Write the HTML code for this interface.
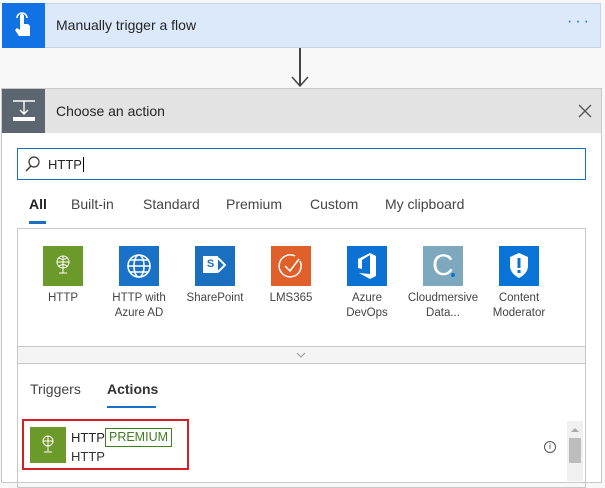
<!DOCTYPE html><html><head><style>
*{box-sizing:border-box;margin:0;padding:0}
body{width:605px;height:478px;background:#f8f8f8;font-family:"Liberation Sans",sans-serif;position:relative;overflow:hidden;color:#252525}
.a{position:absolute}
.lbl{position:absolute;width:80px;text-align:center;font-size:11.5px;line-height:15px;color:#444}
.ic{position:absolute;top:246px;width:40px;height:40px}
.tab{position:absolute;top:196px;font-size:14px;color:#444}
</style></head><body>
<div class="a" style="left:2px;top:3px;width:599px;height:45px;background:#dbe9fa;border:1px solid #c6d3e0"></div>
<div class="a" style="left:2px;top:3px;width:43px;height:45px;background:#1172e6"></div>
<svg class="a" style="left:13px;top:11px" width="20" height="28" viewBox="0 0 20 28"><path d="M7 13V5a2 2 0 0 1 4 0v8h3a3 3 0 0 1 3 3v9H6l-4-6 2-2 3 2z" fill="#fff"/><path d="M4 7a5 5 0 0 1 10 0" stroke="#fff" fill="none" stroke-width="1.5"/></svg>
<div class="a" style="left:56px;top:17px;font-size:14px">Manually trigger a flow</div>
<div class="a" style="left:567px;top:13px;font-size:16px;color:#1172e6;letter-spacing:3px">···</div>
<div class="a" style="left:299px;top:48px;width:1.5px;height:37px;background:#444"></div>
<svg class="a" style="left:291px;top:76px" width="18" height="12"><path d="M1 1l8 9 8-9" stroke="#444" stroke-width="1.5" fill="none"/></svg>
<div class="a" style="left:1px;top:88px;width:601px;height:395px;background:#fff;border:1px solid #c8c8c8"></div>
<div class="a" style="left:2px;top:89px;width:599px;height:44px;background:#e3e3e3"></div>
<div class="a" style="left:2px;top:89px;width:43px;height:44px;background:#5c6670"></div>
<svg class="a" style="left:12px;top:99px" width="24" height="24"><path d="M1 2h22M12 2v13M8 11l4 4 4-4" stroke="#fff" stroke-width="1.4" fill="none"/><rect x="1" y="18" width="22" height="4" fill="#fff"/></svg>
<div class="a" style="left:56px;top:103px;font-size:14px">Choose an action</div>
<svg class="a" style="left:578px;top:104px" width="14" height="14"><path d="M1 1l12 12M13 1L1 13" stroke="#555" stroke-width="1.3"/></svg>
<div class="a" style="left:17px;top:148px;width:569px;height:32px;border:1px solid #1a6fc6"></div>
<svg class="a" style="left:24px;top:155px" width="16" height="18"><circle cx="10" cy="7" r="5" stroke="#333" fill="none" stroke-width="1.2"/><path d="M7 11l-5 5" stroke="#333" stroke-width="1.3"/></svg>
<div class="a" style="left:48px;top:157px;font-size:13px">HTTP<span style="border-left:1px solid #000;margin-left:1px"></span></div>
<div class="tab" style="left:29px"><b style="font-weight:600;color:#222">All</b></div>
<div class="tab" style="left:71px">Built-in</div>
<div class="tab" style="left:143px">Standard</div>
<div class="tab" style="left:226px">Premium</div>
<div class="tab" style="left:310px">Custom</div>
<div class="tab" style="left:385px">My clipboard</div>
<div class="a" style="left:29px;top:221px;width:17px;height:3px;background:#1a6fc6"></div>
<div class="a" style="left:17px;top:228px;width:569px;height:260px;border:1px solid #c8c8c8"></div>
<div class="ic" style="left:43px;background:#6b9a2a"></div>
<div class="ic" style="left:119px;background:#1a72c8"></div>
<div class="ic" style="left:195px;background:#1b6fbf"></div>
<div class="ic" style="left:271px;background:#e0602b"></div>
<div class="ic" style="left:347px;background:#0b72d4"></div>
<div class="ic" style="left:423px;background:#7ea8be"></div>
<div class="ic" style="left:499px;background:#0a74d6"></div>
<svg class="a" style="left:54px;top:254px" width="18" height="24"><circle cx="9" cy="8" r="6" stroke="#fff" fill="none"/><path d="M3 8h12M9 2v12M5 4c3 2 5 2 8 0M5 12c3-2 5-2 8 0M9 14v5M5 19h8" stroke="#fff" fill="none"/></svg>
<svg class="a" style="left:125px;top:252px" width="28" height="28"><circle cx="14" cy="14" r="11" stroke="#fff" fill="none" stroke-width="1.6"/><ellipse cx="14" cy="14" rx="5" ry="11" stroke="#fff" fill="none" stroke-width="1.6"/><path d="M3 14h22M5 8h18M5 20h18" stroke="#fff" stroke-width="1.6"/></svg>
<div class="a" style="left:203px;top:256px;width:15px;height:17px;background:#fff;color:#1b6fbf;font-weight:bold;font-size:11px;text-align:center;line-height:17px">S</div>
<svg class="a" style="left:216px;top:255px" width="12" height="20"><path d="M2 3l7 7-7 7" stroke="#fff" fill="none" stroke-width="2"/></svg>
<svg class="a" style="left:277px;top:252px" width="28" height="28"><path d="M23 9A11 11 0 1 1 18 4" stroke="#fff" fill="none" stroke-width="1.5"/><path d="M8 14l5 5 9-12" stroke="#fff" fill="none" stroke-width="1.5"/></svg>
<svg class="a" style="left:356px;top:252px" width="22" height="28"><path d="M14 1l6 3v20l-6 3-11-6 11 1V3L6 8v9l-4-1V7z" fill="#fff"/></svg>
<div class="a" style="left:432px;top:249px;font-size:30px;color:#fff">C</div><div class="a" style="left:451px;top:273px;width:4px;height:4px;border-radius:2px;background:#0a74d6"></div>
<svg class="a" style="left:508px;top:252px" width="22" height="28"><path d="M11 1l9 4v9c0 6-5 10-9 12-4-2-9-6-9-12V5z" fill="#fff"/><rect x="9.5" y="6" width="3" height="10" fill="#0a74d6"/><rect x="9.5" y="18" width="3" height="3" fill="#0a74d6"/></svg>
<div class="lbl" style="left:23px;top:291px">HTTP</div>
<div class="lbl" style="left:99px;top:291px">HTTP with<br>Azure AD</div>
<div class="lbl" style="left:175px;top:291px">SharePoint</div>
<div class="lbl" style="left:251px;top:291px">LMS365</div>
<div class="lbl" style="left:327px;top:291px">Azure<br>DevOps</div>
<div class="lbl" style="left:401px;top:291px;width:84px">Cloudmersive<br>Data...</div>
<div class="lbl" style="left:479px;top:291px">Content<br>Moderator</div>
<div class="a" style="left:18px;top:346px;width:567px;height:18px;background:#f4f4f4;border-top:1px solid #c8c8c8;border-bottom:1px solid #c8c8c8"></div>
<svg class="a" style="left:296px;top:352px" width="10" height="6"><path d="M1 1l4 4 4-4" stroke="#999" fill="none"/></svg>
<div class="a" style="left:30px;top:381px;font-size:14px;color:#444">Triggers</div>
<div class="a" style="left:107px;top:381px;font-size:14px;font-weight:600;color:#333">Actions</div>
<div class="a" style="left:107px;top:406px;width:49px;height:2px;background:#1a6fc6"></div>
<div class="a" style="left:22px;top:419px;width:167px;height:51px;border:2px solid #d42128"></div>
<div class="a" style="left:30px;top:427px;width:36px;height:36px;background:#6b9a2a"></div>
<svg class="a" style="left:40px;top:434px" width="16" height="22"><circle cx="8" cy="7" r="5" stroke="#fff" fill="none"/><path d="M3 7h10M8 2v10M8 12v5M4 18h8" stroke="#fff" fill="none"/></svg>
<div class="a" style="left:71px;top:430px;font-size:13px">HTTP</div>
<div class="a" style="left:105px;top:428px;width:67px;height:19px;border:1px solid #3f7d20;color:#3f7d20;font-size:12.5px;line-height:17px;text-align:center">PREMIUM</div>
<div class="a" style="left:71px;top:449px;font-size:13px;color:#333">HTTP</div>
<div class="a" style="left:544px;top:441px;width:12px;height:12px;border:1px solid #555;border-radius:50%;font-size:8px;text-align:center;line-height:10px">i</div>
<div class="a" style="left:567px;top:421px;width:16px;height:60px;background:#f0f0f0"></div>
<svg class="a" style="left:571px;top:427px" width="8" height="5"><path d="M0 5l4-4 4 4z" fill="#aaa"/></svg>
<div class="a" style="left:569px;top:438px;width:12px;height:25px;background:#bdbdbd"></div>
</body></html>
